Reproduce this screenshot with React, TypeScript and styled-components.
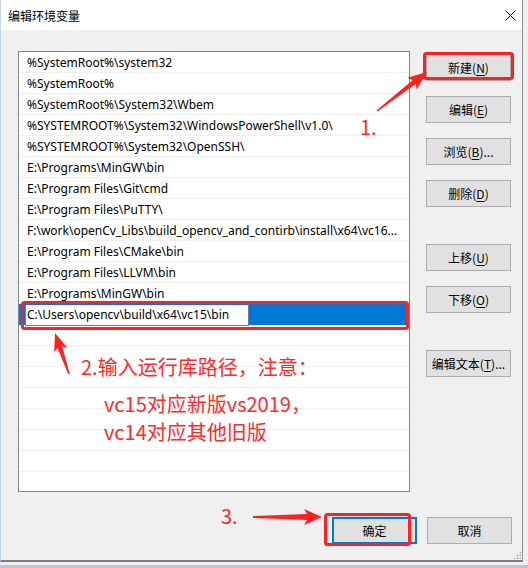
import React from "react";
import styled, { createGlobalStyle } from "styled-components";

const Global = createGlobalStyle`
  html, body { margin: 0; padding: 0; }
  body {
    width: 528px; height: 568px; overflow: hidden;
    background: #e9ecf0;
    font-family: "Noto Sans", "Noto Sans CJK SC", sans-serif;
  }
`;

const Page = styled.div`
  position: relative;
  width: 528px;
  height: 568px;
  background: linear-gradient(to bottom, #eef0f2 0, #eef0f2 565px, #b9c4d6 565px);
`;

const Window = styled.div`
  width: 523px;
  height: 562px;
  box-sizing: border-box;
  background: #f0f0f0;
  border-left: 1px solid #c3d3ea;
  border-right: 1px solid #8f8f8f;
  border-bottom: 2px solid #7d7d7d;
  display: flex;
  flex-direction: column;
`;

const TitleBar = styled.div`
  height: 30px;
  flex: none;
  background: #fff;
  display: flex;
  align-items: center;
  justify-content: space-between;
  padding: 0 6px 0 7px;
  font-size: 12px;
  color: #000;
  font-family: "Noto Sans CJK SC", sans-serif;
`;

const CloseIcon = () => (
  <svg width="11" height="11" viewBox="0 0 11 11">
    <path d="M0.5 0.5 L10.5 10.5 M10.5 0.5 L0.5 10.5" stroke="#000" strokeWidth="1" />
  </svg>
);

const Main = styled.div`
  display: flex;
  gap: 16px;
  padding: 21px 0 0 17px;
`;

const ListBox = styled.div`
  width: 392px;
  height: 441px;
  box-sizing: border-box;
  border: 1px solid #82878f;
  background: #fff;
  overflow: hidden;
`;

const Row = styled.div`
  height: 21px;
  box-sizing: border-box;
  border-bottom: 1px solid #efefef;
  padding: 2px 0 0 8px;
  font-size: 12px;
  line-height: 18px;
  color: #000;
  white-space: nowrap;
  overflow: hidden;
  font-family: "Noto Sans", "Noto Sans CJK SC", sans-serif;
`;

const EditRow = styled.div`
  height: 21px;
  box-sizing: border-box;
  background: #0078d7;
  padding: 1px 0 0 6px;
`;

const EditInput = styled.div`
  width: 224px;
  height: 21px;
  box-sizing: border-box;
  background: #fff;
  border: 1px solid #7a7a7a;
  border-top: none;
  padding: 1px 0 0 1px;
  font-size: 12px;
  line-height: 18px;
  color: #000;
  white-space: nowrap;
  font-family: "Noto Sans", sans-serif;
`;

const ButtonColumn = styled.div`
  display: flex;
  flex-direction: column;
  gap: 15px;
  padding-top: 3px;
`;

const Button = styled.div<{ $extra?: number; $default?: boolean }>`
  width: 85px;
  height: 27px;
  box-sizing: border-box;
  margin-top: ${(p) => p.$extra ?? 0}px;
  background: #e1e1e1;
  border: 1px solid ${(p) => (p.$default ? "#0078d7" : "#adadad")};
  box-shadow: ${(p) => (p.$default ? "inset 0 0 0 1px #0078d7" : "none")};
  display: flex;
  align-items: center;
  justify-content: center;
  font-size: 12px;
  color: #000;
  font-family: "Noto Sans CJK SC", sans-serif;
  u { text-decoration: underline; text-underline-offset: 2px; }
`;

const Footer = styled.div`
  display: flex;
  justify-content: flex-end;
  gap: 10px;
  padding: 25px 10px 0 0;
`;

const Grip = styled.div`
  position: absolute;
  left: 513px;
  top: 551px;
  width: 8px;
  height: 8px;
  background-image: radial-gradient(circle, #b5b5b5 45%, transparent 50%);
  background-size: 3px 3px;
  clip-path: polygon(100% 0, 100% 100%, 0 100%);
`;

const Overlay = styled.svg`
  position: absolute;
  left: 0;
  top: 0;
  pointer-events: none;
`;

const Note = styled.div<{ $x: number; $y: number }>`
  position: absolute;
  left: ${(p) => p.$x}px;
  top: ${(p) => p.$y}px;
  color: #ff2a2a;
  font-size: 20px;
  line-height: 26px;
  white-space: nowrap;
  font-family: "Noto Sans CJK SC", sans-serif;
`;

type P = [number, number];
function arrowPoints(from: P, to: P, L: number, W: number, tailW: number, neckW: number) {
  const dx = to[0] - from[0];
  const dy = to[1] - from[1];
  const len = Math.hypot(dx, dy);
  const ux = dx / len, uy = dy / len;
  const nx = -uy, ny = ux;
  const bx = to[0] - ux * L, by = to[1] - uy * L;
  const bbx = to[0] - ux * (L + 3), bby = to[1] - uy * (L + 3);
  const pts: P[] = [
    [from[0] + nx * tailW / 2, from[1] + ny * tailW / 2],
    [bx + nx * neckW / 2, by + ny * neckW / 2],
    [bbx + nx * W / 2, bby + ny * W / 2],
    to,
    [bbx - nx * W / 2, bby - ny * W / 2],
    [bx - nx * neckW / 2, by - ny * neckW / 2],
    [from[0] - nx * tailW / 2, from[1] - ny * tailW / 2],
  ];
  return pts.map((p) => `${p[0].toFixed(1)},${p[1].toFixed(1)}`).join(" ");
}

const RED = "#ff2020";

const paths = [
  "%SystemRoot%\\system32",
  "%SystemRoot%",
  "%SystemRoot%\\System32\\Wbem",
  "%SYSTEMROOT%\\System32\\WindowsPowerShell\\v1.0\\",
  "%SYSTEMROOT%\\System32\\OpenSSH\\",
  "E:\\Programs\\MinGW\\bin",
  "E:\\Program Files\\Git\\cmd",
  "E:\\Program Files\\PuTTY\\",
  "F:\\work\\openCv_Libs\\build_opencv_and_contirb\\install\\x64\\vc16...",
  "E:\\Program Files\\CMake\\bin",
  "E:\\Program Files\\LLVM\\bin",
  "E:\\Programs\\MinGW\\bin",
];

export default function App() {
  return (
    <Page>
      <Global />
      <Window>
        <TitleBar>
          <span>编辑环境变量</span>
          <CloseIcon />
        </TitleBar>
        <Main>
          <ListBox>
            {paths.map((p, i) => (
              <Row key={i}>{p}</Row>
            ))}
            <EditRow>
              <EditInput>C:\Users\opencv\build\x64\vc15\bin</EditInput>
            </EditRow>
            {Array.from({ length: 8 }).map((_, i) => (
              <Row key={"e" + i} />
            ))}
          </ListBox>
          <ButtonColumn>
            <Button>新建(<u>N</u>)</Button>
            <Button>编辑(<u>E</u>)</Button>
            <Button>浏览(<u>B</u>)...</Button>
            <Button>删除(<u>D</u>)</Button>
            <Button $extra={22}>上移(<u>U</u>)</Button>
            <Button>下移(<u>O</u>)</Button>
            <Button $extra={22}>编辑文本(<u>T</u>)...</Button>
          </ButtonColumn>
        </Main>
        <Footer>
          <Button $default>确定</Button>
          <Button>取消</Button>
        </Footer>
      </Window>
      <Grip />
      <Overlay width="528" height="568" viewBox="0 0 528 568">
        <rect x="424.5" y="53.5" width="88" height="25" rx="2" fill="none" stroke={RED} strokeWidth="3" />
        <rect x="22.5" y="302.5" width="385" height="26" rx="2" fill="none" stroke={RED} strokeWidth="3" />
        <rect x="325.5" y="514.5" width="84" height="30" rx="2" fill="none" stroke={RED} strokeWidth="3" />
        <polygon points={arrowPoints([377, 111], [427, 72], 16, 15, 1.5, 5)} fill={RED} />
        <polygon points={arrowPoints([69, 374], [55, 333], 15, 14, 1.5, 5)} fill={RED} />
        <polygon points={arrowPoints([253, 517], [322, 517], 15, 16, 2, 6)} fill={RED} />
      </Overlay>
      <Note $x={360} $y={114}>1.</Note>
      <Note $x={81} $y={354}>2.输入运行库路径，注意：</Note>
      <Note $x={104} $y={391}>vc15对应新版vs2019，</Note>
      <Note $x={104} $y={419}>vc14对应其他旧版</Note>
      <Note $x={221} $y={503}>3.</Note>
    </Page>
  );
}
